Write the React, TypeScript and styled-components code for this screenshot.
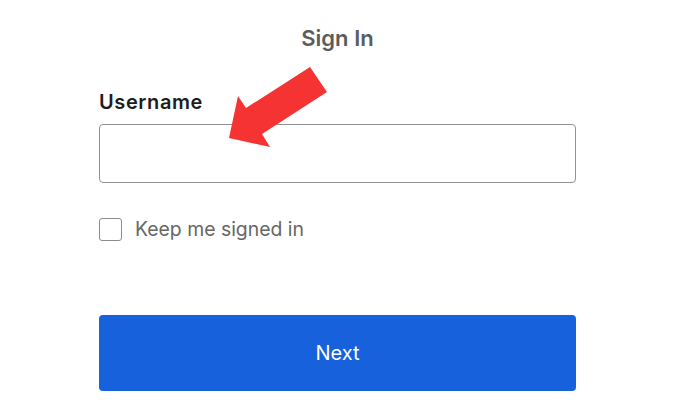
import styled, { createGlobalStyle } from 'styled-components';

const GlobalStyle = createGlobalStyle`
  html, body {
    margin: 0;
    padding: 0;
    background: #ffffff;
  }
  body {
    font-family: Inter, "Noto Sans", "Liberation Sans", sans-serif;
  }
`;

const Page = styled.div`
  position: relative;
  width: 700px;
  height: 400px;
  overflow: hidden;
  background: #ffffff;
`;

const Form = styled.form`
  display: flex;
  flex-direction: column;
  width: 477px;
  margin-left: 99px;
  padding-top: 24px;
`;

const Title = styled.h1`
  margin: 0;
  text-align: center;
  font-size: 22px;
  line-height: 28px;
  font-weight: 600;
  color: #5c5c5c;
`;

const Label = styled.label`
  margin-top: 38px;
  font-size: 20px;
  line-height: 24px;
  font-weight: 600;
  letter-spacing: 0.6px;
  color: #1d1d1d;
`;

const Input = styled.input`
  box-sizing: border-box;
  margin-top: 10px;
  width: 100%;
  height: 59px;
  border: 1.5px solid #929292;
  border-radius: 4px;
  background: #ffffff;
  outline: none;
`;

const CheckRow = styled.label`
  display: flex;
  align-items: center;
  gap: 13px;
  margin-top: 34px;
  font-size: 19.4px;
  line-height: 24px;
  color: #666666;
`;

const Box = styled.span`
  box-sizing: border-box;
  width: 23px;
  height: 23px;
  border: 1.5px solid #8c8c8c;
  border-radius: 3px;
  background: #ffffff;
`;

const Submit = styled.button`
  margin-top: 74px;
  width: 100%;
  height: 76px;
  border: none;
  border-radius: 4px;
  background: #1762dc;
  color: #ffffff;
  font-family: inherit;
  font-size: 20px;
  font-weight: 400;
  cursor: pointer;
`;

const Pointer = styled.svg`
  position: absolute;
  left: 0;
  top: 0;
  pointer-events: none;
`;

export default function App() {
  return (
    <Page>
      <GlobalStyle />
      <Form onSubmit={e => e.preventDefault()}>
        <Title>Sign In</Title>
        <Label htmlFor="username">Username</Label>
        <Input id="username" type="text" />
        <CheckRow>
          <Box />
          Keep me signed in
        </CheckRow>
        <Submit type="submit">Next</Submit>
      </Form>
      <Pointer width="700" height="400" viewBox="0 0 700 400">
        <polygon
          points="310,67 327,92 262,134 270,147 229,138 238,96 246,108"
          fill="#f53333"
        />
      </Pointer>
    </Page>
  );
}
